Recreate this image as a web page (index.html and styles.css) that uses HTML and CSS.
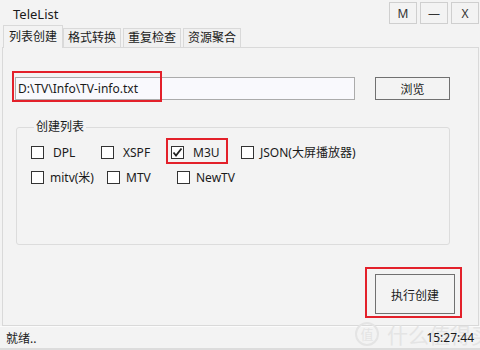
FILE: index.html
```html
<!DOCTYPE html>
<html lang="zh-CN">
<head>
    <meta charset="UTF-8">
    <title>TeleList</title>
    <link rel="stylesheet" href="styles.css">
</head>
<body>
    <div class="window">
        <div class="titlebar">
            <span class="title">TeleList</span>
            <div class="win-btns">
                <button class="win-btn">M</button>
                <button class="win-btn">—</button>
                <button class="win-btn">X</button>
            </div>
        </div>

        <div class="tabs">
            <div class="tab active">列表创建</div>
            <div class="tab">格式转换</div>
            <div class="tab">重复检查</div>
            <div class="tab">资源聚合</div>
        </div>

        <div class="panel">
            <div class="file-row">
                <div class="path-wrap">
                    <input class="path" type="text" value="D:\TV\Info\TV-info.txt">
                    <span class="mark mark-path"></span>
                </div>
                <button class="btn browse">浏览</button>
            </div>

            <fieldset class="group">
                <legend>创建列表</legend>
                <div class="check-row">
                    <label class="check w70"><span class="box"></span><span class="txt wide">DPL</span></label>
                    <label class="check w70"><span class="box"></span><span class="txt wide">XSPF</span></label>
                    <label class="check w70 marked">
                        <span class="box checked">
                            <svg width="11" height="11" viewBox="0 0 11 11"><path d="M1.5 5.5 L4 8.5 L9.5 1.5" fill="none" stroke="#222" stroke-width="1.8"/></svg>
                        </span>
                        <span class="txt wide">M3U</span>
                        <span class="mark mark-m3u"></span>
                    </label>
                    <label class="check"><span class="box"></span><span class="txt">JSON(大屏播放器)</span></label>
                </div>
                <div class="check-row">
                    <label class="check w76"><span class="box"></span><span class="txt">mitv(米)</span></label>
                    <label class="check w70"><span class="box"></span><span class="txt">MTV</span></label>
                    <label class="check"><span class="box"></span><span class="txt">NewTV</span></label>
                </div>
            </fieldset>

            <div class="run-row">
                <div class="run-wrap">
                    <button class="btn run">执行创建</button>
                    <span class="mark mark-run"></span>
                </div>
            </div>
        </div>

        <div class="statusbar">
            <span>就绪..</span>
            <span class="time">15:27:44</span>
            <div class="watermark"><span class="wm-circle">值</span><span>什么值得买</span></div>
        </div>
    </div>
</body>
</html>
```

FILE: styles.css
```css
:root {
    --bg: #f3f3f3;
    --line: #d9d9d9;
    --dark-line: #707070;
    --red: #e3202a;
    --text: #1a1a1a;
}

* {
    box-sizing: border-box;
}

body {
    margin: 0;
    background-color: var(--bg);
    color: var(--text);
    font-family: "Noto Sans", "Noto Sans CJK SC", sans-serif;
    font-size: 12px;
}

.window {
    width: 480px;
    height: 350px;
    display: flex;
    flex-direction: column;
    overflow: hidden;
}

.titlebar {
    height: 25px;
    display: flex;
    align-items: flex-start;
    justify-content: space-between;
}

.title {
    margin: 5px 0 0 13px;
    font-size: 13px;
}

.win-btns {
    display: flex;
    gap: 3px;
    margin: 2px 1px 0 0;
}

.win-btn {
    width: 28px;
    height: 22px;
    padding: 0;
    border: 1px solid #cfcfcf;
    background-color: var(--bg);
    color: #333;
    font-family: "Noto Sans", sans-serif;
    font-size: 12px;
}

.tabs {
    height: 22px;
    display: flex;
    align-items: flex-end;
    padding-left: 3px;
    position: relative;
    z-index: 1;
}

.tab {
    width: 58px;
    height: 19px;
    margin-right: 2px;
    border: 1px solid var(--line);
    border-bottom: none;
    background-color: #f0f0f0;
    text-align: center;
    line-height: 18px;
    font-size: 12px;
}

.tab.active {
    width: 60px;
    height: 23px;
    margin-right: 0;
    margin-bottom: -1px;
    background-color: var(--bg);
    line-height: 22px;
}

.panel {
    height: 279px;
    margin: 0 1px 0 2px;
    border: 1px solid var(--line);
}

.file-row {
    display: flex;
    align-items: center;
    padding: 29px 0 0 12px;
}

.path-wrap {
    position: relative;
}

.path {
    display: block;
    width: 340px;
    height: 23px;
    padding: 0 2px;
    border: 1px solid #ababab;
    background-color: #f9f9fd;
    color: var(--text);
    font-family: "Noto Sans", sans-serif;
    font-size: 12px;
}

.btn {
    border: 1px solid var(--dark-line);
    background-color: var(--bg);
    color: var(--text);
    font-family: "Noto Sans CJK SC", sans-serif;
    font-size: 12px;
    padding: 0;
}

.browse {
    width: 75px;
    height: 23px;
    margin-left: 20px;
}

.mark {
    position: absolute;
    border: 2px solid var(--red);
    pointer-events: none;
}

.mark-path {
    left: -3px;
    top: -6px;
    width: 150px;
    height: 31px;
}

.group {
    width: 434px;
    height: 126px;
    margin: 19px 0 0 13px;
    padding: 11px 0 0 14px;
    border: 1px solid #dcdcdc;
    border-radius: 3px;
}

.group legend {
    margin-left: 3px;
    padding: 0 2px;
    line-height: 16px;
    font-size: 12px;
}

.check-row {
    display: flex;
    align-items: center;
    height: 13px;
    margin-bottom: 12px;
}

.check {
    position: relative;
    display: flex;
    align-items: center;
}

.w70 {
    width: 70px;
}

.w76 {
    width: 76px;
}

.box {
    width: 13px;
    height: 13px;
    border: 1px solid #333;
    background-color: #fff;
    display: flex;
    align-items: center;
    justify-content: center;
    flex-shrink: 0;
}

.txt {
    margin-left: 6px;
    white-space: nowrap;
    line-height: 13px;
}

.txt.wide {
    margin-left: 9px;
}

.mark-m3u {
    left: -5px;
    top: -8px;
    width: 62px;
    height: 26px;
}

.run-row {
    display: flex;
    justify-content: flex-end;
    padding: 29px 23px 0 0;
}

.run-wrap {
    position: relative;
}

.run {
    display: block;
    width: 80px;
    height: 40px;
}

.mark-run {
    left: -10px;
    top: -7px;
    width: 97px;
    height: 51px;
}

.statusbar {
    position: relative;
    flex: 1;
    display: flex;
    align-items: center;
    justify-content: space-between;
    padding: 0 6px;
    border-top: 1px solid #fbfbfb;
    border-bottom: 2px solid #dcdcdc;
}

.time {
    font-family: "Noto Sans", sans-serif;
    position: relative;
    z-index: 1;
}

.watermark {
    position: absolute;
    left: 355px;
    top: -7px;
    display: flex;
    align-items: center;
    gap: 8px;
    color: #e4e4e4;
    font-family: "Noto Sans CJK SC", sans-serif;
    font-size: 21px;
    line-height: 28px;
    white-space: nowrap;
}

.wm-circle {
    width: 24px;
    height: 24px;
    border: 2px solid #e4e4e4;
    border-radius: 50%;
    font-size: 13px;
    line-height: 20px;
    display: flex;
    align-items: center;
    justify-content: center;
}
```
